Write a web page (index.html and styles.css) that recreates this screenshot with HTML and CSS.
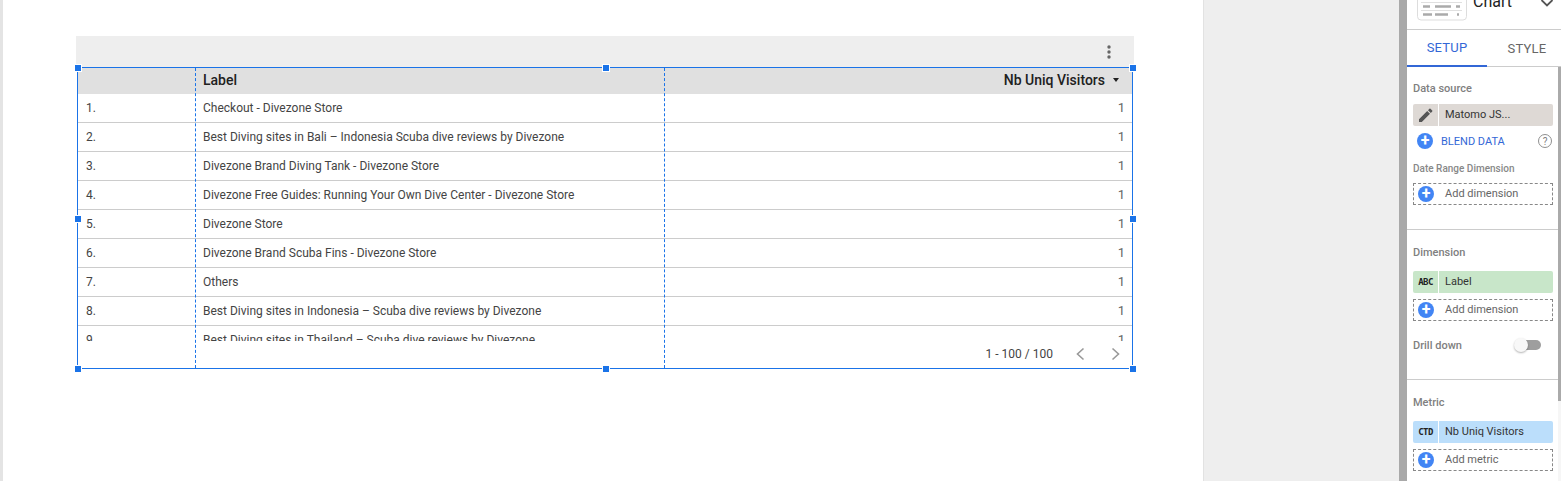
FILE: index.html
```html
<!DOCTYPE html>
<html lang="en">
<head>
<meta charset="utf-8">
<title>Report editor</title>
<link rel="stylesheet" href="styles.css">
</head>
<body>
<div class="app">
  <div class="edge"></div>
  <main class="canvas">
    <section class="chart">
      <div class="chart-bar">
        <svg class="kebab" width="4" height="14" viewBox="0 0 4 14"><circle cx="2" cy="2" r="1.7"/><circle cx="2" cy="7" r="1.7"/><circle cx="2" cy="12" r="1.7"/></svg>
      </div>
      <div class="frame">
        <div class="table">
          <div class="row head">
            <div class="c-idx"></div>
            <div class="c-label">Label</div>
            <div class="c-num">Nb Uniq Visitors<span class="sort"></span></div>
          </div>
          <div class="row"><div class="c-idx">1.</div><div class="c-label">Checkout - Divezone Store</div><div class="c-num">1</div></div>
          <div class="row"><div class="c-idx">2.</div><div class="c-label">Best Diving sites in Bali – Indonesia Scuba dive reviews by Divezone</div><div class="c-num">1</div></div>
          <div class="row"><div class="c-idx">3.</div><div class="c-label">Divezone Brand Diving Tank - Divezone Store</div><div class="c-num">1</div></div>
          <div class="row"><div class="c-idx">4.</div><div class="c-label">Divezone Free Guides: Running Your Own Dive Center - Divezone Store</div><div class="c-num">1</div></div>
          <div class="row"><div class="c-idx">5.</div><div class="c-label">Divezone Store</div><div class="c-num">1</div></div>
          <div class="row"><div class="c-idx">6.</div><div class="c-label">Divezone Brand Scuba Fins - Divezone Store</div><div class="c-num">1</div></div>
          <div class="row"><div class="c-idx">7.</div><div class="c-label">Others</div><div class="c-num">1</div></div>
          <div class="row"><div class="c-idx">8.</div><div class="c-label">Best Diving sites in Indonesia – Scuba dive reviews by Divezone</div><div class="c-num">1</div></div>
          <div class="row"><div class="c-idx">9.</div><div class="c-label">Best Diving sites in Thailand – Scuba dive reviews by Divezone</div><div class="c-num">1</div></div>
        </div>
        <div class="pager">
          <span class="pager-text">1 - 100 / 100</span>
          <svg class="pager-arrow" width="10" height="14" viewBox="0 0 10 14"><path d="M8.5 1.5 L2.5 7 L8.5 12.5"/></svg>
          <svg class="pager-arrow" width="10" height="14" viewBox="0 0 10 14"><path d="M1.5 1.5 L7.5 7 L1.5 12.5"/></svg>
        </div>
        <div class="guide guide-a"></div>
        <div class="guide guide-b"></div>
        <span class="handle h-tl"></span><span class="handle h-tc"></span><span class="handle h-tr"></span>
        <span class="handle h-ml"></span><span class="handle h-mr"></span>
        <span class="handle h-bl"></span><span class="handle h-bc"></span><span class="handle h-br"></span>
      </div>
    </section>
  </main>
  <div class="gutter"></div>
  <div class="rail"></div>
  <aside class="panel">
    <header class="panel-head">
      <svg class="chart-icon" width="50" height="22" viewBox="0 0 50 22">
        <path class="ci-frame" d="M.5 -8 H49.500 V16.500 a3.500 3.500 0 0 1 -3.500 3.500 H4 a3.500 3.500 0 0 1 -3.500 -3.500 Z"/>
        <path class="ci-line" d="M4 2.500 H45 M4 10.500 H45"/>
        <path class="ci-bar" d="M6 6.500 H13 M18 6.500 H34 M39 6.500 H43 M6 14.500 H15 M18 14.500 H31 M40 14.500 H42"/>
      </svg>
      <span class="chart-name">Chart</span>
      <svg class="chev" width="14" height="9" viewBox="0 0 14 9"><path d="M1.500 0 L7 5.500 L12.500 0"/></svg>
    </header>
    <nav class="tabs">
      <div class="tab active">SETUP</div>
      <div class="tab">STYLE</div>
    </nav>
    <div class="panel-body">
      <span class="thumb"></span>
      <section class="group g-source">
        <h3 class="label">Data source</h3>
        <div class="pill pill-source">
          <span class="pill-icon"><svg width="16" height="16" viewBox="0 0 16 16"><path d="M1 12.200 V15 H3.800 L12 6.800 L9.200 4 Z M14.200 4.600 a.8 .8 0 0 0 0 -1.100 L12.500 1.800 a.8 .8 0 0 0 -1.100 0 L10 3.200 L12.800 6 Z"/></svg></span>
          <span class="pill-text">Matomo JS...</span>
        </div>
        <div class="blend">
          <span class="plus">+</span>
          <span class="blend-text">BLEND DATA</span>
          <span class="help">?</span>
        </div>
        <h4 class="sublabel">Date Range Dimension</h4>
        <div class="add"><span class="plus">+</span><span>Add dimension</span></div>
      </section>
      <section class="group g-dim">
        <h3 class="label">Dimension</h3>
        <div class="pill pill-dim pill-low">
          <span class="pill-icon mono">ABC</span>
          <span class="pill-text">Label</span>
        </div>
        <div class="add add-near"><span class="plus">+</span><span>Add dimension</span></div>
        <div class="drill">
          <span class="label">Drill down</span>
          <span class="toggle"><span class="knob"></span></span>
        </div>
      </section>
      <section class="group g-metric">
        <h3 class="label">Metric</h3>
        <div class="pill pill-metric pill-low">
          <span class="pill-icon mono">CTD</span>
          <span class="pill-text">Nb Uniq Visitors</span>
        </div>
        <div class="add add-near"><span class="plus">+</span><span>Add metric</span></div>
      </section>
    </div>
  </aside>
</div>
</body>
</html>
```
FILE: styles.css
```css
* { box-sizing: border-box; }
html, body { margin: 0; height: 100%; overflow: hidden; background: #fff; }
body { font-family: Roboto, "Liberation Sans", sans-serif; color: #333; }
.app { display: flex; width: 1561px; height: 481px; overflow: hidden; }
.edge { width: 3px; background: #e4e4e4; flex: none; }
.canvas { width: 1200px; flex: none; background: #fff; padding: 36px 0 0 73px; }
.gutter { width: 196px; flex: none; background: #eee; border-left: 1px solid #e2e2e2; }
.rail { width: 8px; flex: none; background: #a9a9a9; }
.chart { width: 1058px; }
.chart-bar { height: 31px; background: #eee; display: flex; align-items: center; justify-content: flex-end; padding-right: 23px; }
.kebab { fill: #666; }
.frame { position: relative; margin-left: 1px; width: 1056px; height: 302px; border: 1px solid #1a73e8; }
.table { height: 273px; overflow: hidden; }
.row { display: grid; grid-template-columns: 118px 469px 1fr; height: 29px; border-bottom: 1px solid #ccc; font-size: 12px; color: #444; align-items: center; }
.head { height: 26px; background: #e0e0e0; border-bottom: 0; font-size: 14px; font-weight: 500; color: #212121; padding-bottom: 2px; }
.c-idx { padding-left: 8px; }
.c-label { padding-left: 7px; white-space: nowrap; }
.c-num { text-align: right; padding: 0 7px 2px 0; color: #666; font-size: 13px; }
.head .c-num { color: #212121; font-size: 14px; padding: 0 13px 0 0; display: flex; align-items: center; justify-content: flex-end; }
.sort { width: 0; height: 0; margin-left: 8px; border-left: 3px solid transparent; border-right: 3px solid transparent; border-top: 4px solid #212121; }
.pager { height: 27px; display: flex; align-items: center; justify-content: flex-end; padding: 0 11px 2px 0; font-size: 12px; color: #444; }
.pager-text { margin-right: 22px; }
.pager-arrow { fill: none; stroke: #999; stroke-width: 1.6; }
.pager-arrow + .pager-arrow { margin-left: 26px; }
.guide { position: absolute; top: 0; bottom: 0; border-left: 1px dashed #1a73e8; }
.guide-a { left: 117px; }
.guide-b { left: 586px; }
.handle { position: absolute; width: 6px; height: 6px; background: #1a73e8; outline: 1px solid #fff; }
.h-tl { left: -3px; top: -3px; }
.h-tc { left: 525px; top: -3px; }
.h-tr { right: -4px; top: -3px; }
.h-ml { left: -3px; top: 148px; }
.h-mr { right: -4px; top: 148px; }
.h-bl { left: -3px; bottom: -4px; }
.h-bc { left: 525px; bottom: -4px; }
.h-br { right: -4px; bottom: -4px; }

.panel { width: 154px; flex: none; background: #fff; display: flex; flex-direction: column; overflow: hidden; }
.panel-head { height: 30px; display: flex; align-items: flex-start; border-bottom: 1px solid #ccc; padding-left: 10px; overflow: hidden; flex: none; }
.chart-icon { flex: none; }
.ci-frame { fill: #fff; stroke: #ddd; stroke-width: 1; }
.ci-line { stroke: #e0e0e0; stroke-width: 1; fill: none; }
.ci-bar { stroke: #aaa; stroke-width: 2.5; fill: none; }
.chart-name { font-size: 16px; line-height: 16px; color: #222; margin: -6px 0 0 6px; flex: 1; }
.chev { fill: none; stroke: #555; stroke-width: 1.8; margin-right: 7px; flex: none; }
.tabs { height: 37px; display: flex; border-bottom: 1px solid #ccc; flex: none; }
.tab { width: 80px; flex: none; display: flex; align-items: center; justify-content: center; font-size: 13px; letter-spacing: .2px; color: #666; margin-bottom: -1px; }
.active { color: #3367d6; border-bottom: 2px solid #3367d6; }
.panel-body { position: relative; flex: 1; border-right: 3px solid #f6f6f6; }
.thumb { position: absolute; top: 0; right: -3px; width: 3px; height: 334px; background: #aaa; }
.group { padding: 0 6px; border-bottom: 1px solid #ccc; }
.g-source { height: 163px; padding-top: 15px; }
.g-dim { height: 150px; padding-top: 16px; }
.g-metric { border-bottom: 0; padding-top: 16px; }
.label { display: block; font-size: 11px; font-weight: 500; color: #808080; margin: 0; line-height: 13px; }
.sublabel { font-size: 10px; font-weight: 500; color: #888; margin: 12px 0 0; line-height: 12px; }
.pill { height: 22px; display: flex; border-radius: 2px; overflow: hidden; margin-top: 9px; width: 140px; font-size: 11px; color: #333; }
.pill-low { margin-top: 12px; }
.pill-icon { width: 26px; display: flex; align-items: center; justify-content: center; border-right: 1px solid #fff; flex: none; }
.pill-icon svg { fill: #555; }
.pill-text { padding-left: 6px; line-height: 22px; }
.mono { font-family: "DejaVu Sans Mono", "Liberation Mono", monospace; font-size: 9px; letter-spacing: -.6px; font-weight: 700; color: #222; }
.pill-source { background: #ded9d5; }
.pill-dim { background: #c8e6c9; }
.pill-metric { background: #bbdefb; }
.blend { display: flex; align-items: center; height: 20px; margin-top: 5px; font-size: 11px; padding-left: 4px; }
.blend-text { color: #3367d6; margin-left: 8px; flex: 1; }
.help { width: 14px; height: 14px; border: 1.500px solid #8f8f8f; border-radius: 50%; font-size: 10px; color: #808080; display: flex; align-items: center; justify-content: center; }
.plus { width: 16px; height: 16px; border-radius: 50%; background: #4285f4; color: #fff; font-size: 16px; font-weight: 700; line-height: 16px; display: flex; align-items: center; justify-content: center; flex: none; }
.add { display: flex; align-items: center; width: 140px; height: 22px; margin-top: 8px; border: 1px dashed #888; font-size: 11px; color: #666; padding: 0 0 2px 4px; gap: 11px; }
.add .plus { margin-top: 2px; }
.add-near { margin-top: 6px; }
.drill { display: flex; align-items: center; justify-content: space-between; margin-top: 16px; padding-right: 11px; height: 16px; }
.toggle { position: relative; width: 26px; height: 10px; background: #9e9e9e; border-radius: 5px; display: block; }
.knob { position: absolute; left: -1px; top: -2px; width: 14px; height: 14px; border-radius: 50%; background: #f8f8f8; box-shadow: 0 1px 2px rgba(0,0,0,.3); }
```
